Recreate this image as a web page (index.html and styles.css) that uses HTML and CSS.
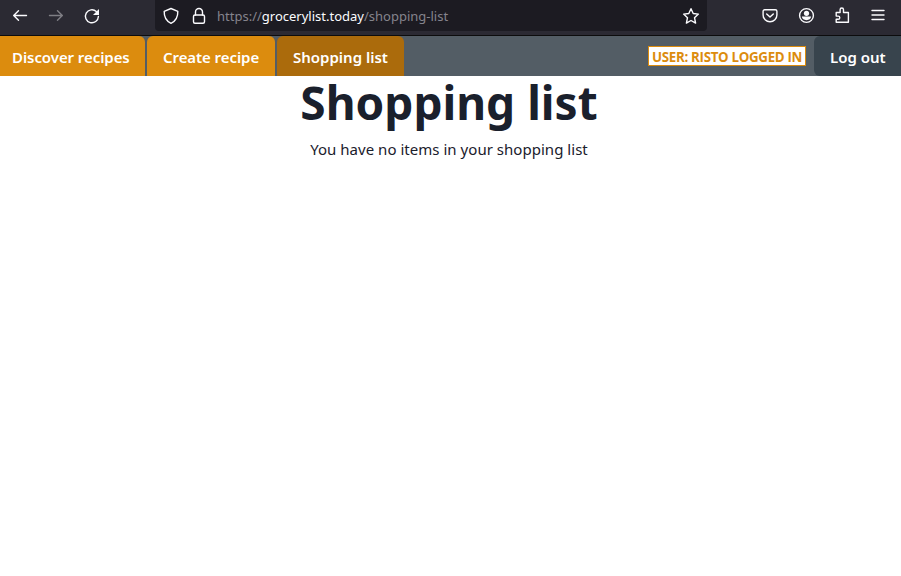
FILE: index.html
```html
<!DOCTYPE html>
<html lang="en">
<head>
<meta charset="utf-8">
<title>Shopping list</title>
<link rel="stylesheet" href="styles.css">
</head>
<body>
<header class="toolbar">
  <div class="history">
    <svg class="icon" viewBox="0 0 18 18"><path d="M15.500 8.500H2.800M7.500 3.700 2.700 8.500l4.800 4.800"/></svg>
    <svg class="icon disabled" viewBox="0 0 18 18"><path d="M2.500 8.500h12.700M10.500 3.700l4.800 4.800-4.800 4.800"/></svg>
    <svg class="icon" viewBox="0 0 18 18"><path d="M15.400 9.500A6.500 6.500 0 1 1 13.300 4.500L14 5"/><path class="solid" d="M16 2V8H10Z"/></svg>
  </div>
  <div class="address">
    <svg class="icon" viewBox="0 0 18 18"><path d="M9 1.500 15.800 4.300C16 9.500 14 14 9 16.300 4 14 2 9.500 2.200 4.300Z"/></svg>
    <svg class="icon lock" viewBox="0 0 18 18"><rect x="3.500" y="8" width="11" height="8.300" rx="1.500"/><path d="M5.500 8V5a3.500 3.500 0 0 1 7 0v3"/></svg>
    <span class="url">https://<b>grocerylist.today</b>/shopping-list</span>
    <svg class="icon star" viewBox="0 0 18 18"><path d="m9 1.700 2.200 4.800 5.200.6-3.900 3.600 1.100 5.400L9 13.500l-4.600 2.600 1.100-5.400L1.600 7.100l5.200-.6Z"/></svg>
  </div>
  <div class="tools">
    <svg class="icon" viewBox="0 0 18 18"><path d="M3.700 2.700h10.600a1.600 1.600 0 0 1 1.600 1.600v3.600a6.900 6.900 0 0 1-13.800 0V4.300A1.600 1.600 0 0 1 3.700 2.700Z"/><path d="M5.700 6.900 9 10.100l3.300-3.200"/></svg>
    <svg class="icon" viewBox="0 0 18 18"><circle cx="9.500" cy="8.500" r="6.900"/><circle class="solid" cx="9.500" cy="6.300" r="2.600"/><path class="solid" d="M4.900 9.600h9.200c0 2.200-2.200 3.600-4.600 3.600s-4.600-1.400-4.600-3.600Z"/></svg>
    <svg class="icon" viewBox="0 0 18 18"><path d="M3.200 5.500h3.900V2.700a1.700 1.700 0 0 1 3.400 0v2.800h4.900v9.800H3.200v-3h2a1.600 1.600 0 0 0 0-3.200h-2Z"/></svg>
    <svg class="icon" viewBox="0 0 18 18"><path d="M3 3.500h12M3 8h12M3 12.500h12"/></svg>
  </div>
</header>
<nav class="nav">
  <a class="tab first">Discover recipes</a>
  <a class="tab create">Create recipe</a>
  <a class="tab active">Shopping list</a>
  <span class="user">USER: RISTO LOGGED IN</span>
  <a class="logout">Log out</a>
</nav>
<main>
  <h1>Shopping list</h1>
  <p>You have no items in your shopping list</p>
</main>
</body>
</html>
```
FILE: styles.css
```css
* { box-sizing: border-box; }
body { margin: 0; background: #fff; color: #1a202c; font-family: "Noto Sans", sans-serif; }
.toolbar { display: flex; height: 36px; background: #2b2a33; border-bottom: 1px solid #0c0c0d; }
.icon { display: block; flex: none; width: 18px; height: 18px; fill: none; stroke: #fbfbfe; stroke-width: 1.4; stroke-linecap: round; stroke-linejoin: round; }
.icon .solid { fill: #fbfbfe; stroke: none; }
.disabled { opacity: .4; }
.history { display: flex; gap: 18px; width: 155px; padding: 7px 0 0 11px; }
.address { display: flex; align-items: center; width: 552px; height: 31px; padding: 0 7px; background: #1c1b22; border-radius: 0 0 4px 4px; }
.lock { margin-left: 10px; }
.url { margin-left: 9px; font-size: 13px; line-height: 18px; color: #85848d; white-space: nowrap; }
.url b { font-weight: 400; color: #fbfbfe; }
.star { margin-left: auto; }
.tools { display: flex; gap: 18px; padding: 7px 0 0 54px; }
.nav { display: flex; align-items: flex-start; height: 40px; background: #535d65; font-size: 15px; font-weight: 600; color: #fff; white-space: nowrap; }
.tab { height: 40px; padding-left: 16px; line-height: 43px; background: #dc8c0e; border-radius: 6px 6px 0 0; margin-right: 2px; }
.first { width: 145px; padding-left: 12px; border-top-left-radius: 0; letter-spacing: -.07px; }
.create { width: 128px; letter-spacing: -.07px; }
.active { width: 127px; background: #ab6b0c; }
.user { width: 158px; height: 20px; margin: 10px 8px 0 auto; border: 1px solid #dc8c0e; background: #fff; color: #dc8c0e; font-family: "Open Sans", sans-serif; font-size: 13.300px; font-weight: 700; letter-spacing: -.3px; line-height: 20px; padding-left: 3px; }
.logout { width: 87px; height: 40px; padding-left: 16px; line-height: 43px; background: #38444d; border-radius: 6px 0 0 6px; }
h1 { margin: 0; padding-right: 3px; font-size: 46px; font-weight: 700; line-height: 52px; text-align: center; }
p { margin: 0; padding-right: 3px; font-size: 15px; letter-spacing: .03px; line-height: 24px; padding-top: 9px; text-align: center; }
```
